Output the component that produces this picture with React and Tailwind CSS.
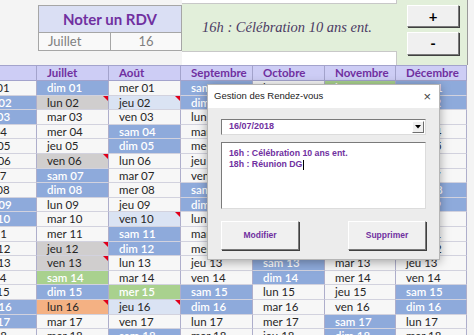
import React from "react";

const DAYS = ["dim", "lun", "mar", "mer", "jeu", "ven", "sam"];

// colonnes du planning (la première, Juin, est coupée par le bord gauche)
const MONTHS = [
  { name: "Juin", start: 5, w: "w-[72px]", special: {} },
  { name: "Juillet", start: 0, w: "w-[72px]", special: { 2: "gray", 6: "gray", 12: "gray", 13: "gray", 14: "holiday", 16: "selected" } },
  { name: "Août", start: 3, w: "w-[72px]", special: { 2: "light", 10: "light", 15: "holiday", 16: "light" } },
  { name: "Septembre", start: 6, w: "w-[72px]", special: {} },
  { name: "Octobre", start: 1, w: "w-[72px]", special: {} },
  { name: "Novembre", start: 4, w: "w-[71px]", special: { 1: "holiday", 11: "holiday" } },
  { name: "Décembre", start: 6, w: "w-[71px]", special: {} },
];

const CELL_STYLES = {
  weekend: "bg-[#8eaadb] text-white font-semibold",
  holiday: "bg-[#a9d18e] text-white font-semibold",
  selected: "bg-[#f4b183] text-[#262626]",
  gray: "bg-[#d0cece] text-[#262626]",
  light: "bg-[#dae3f3] text-[#262626]",
  normal: "bg-[#f7f7f7] text-[#262626]",
};

const WITH_MARKER = ["gray", "light", "selected"];

function DayCell({ month, day }) {
  const dow = (month.start + day - 1) % 7;
  let kind = month.special[day];
  if (!kind) kind = dow === 0 || dow === 6 ? "weekend" : "normal";
  const label = `${DAYS[dow]} ${String(day).padStart(2, "0")}`;
  return (
    <div
      className={`relative h-[14.6px] flex items-center pl-[10px] border-b border-r border-b-[#d2d2de] border-r-[#aeaecb] text-[11.5px] leading-none ${CELL_STYLES[kind]}`}
    >
      {label}
      {WITH_MARKER.includes(kind) && (
        <div className="absolute top-0 right-0 w-0 h-0 border-t-[5px] border-l-[5px] border-t-[#e0001b] border-l-transparent" />
      )}
    </div>
  );
}

function MonthColumn({ month }) {
  const days = Array.from({ length: 18 }, (_, i) => i + 1);
  return (
    <div className={`${month.w} shrink-0 flex flex-col`}>
      <div className="h-[16px] flex items-center pl-[10px] bg-[#cdcdf5] border-y border-r border-[#a3a3cc] text-[11.5px] font-bold text-[#7030a0] leading-none">
        {month.name}
      </div>
      {days.map((d) => (
        <DayCell key={d} month={month} day={d} />
      ))}
    </div>
  );
}

function Win3dButton({ children, className }) {
  return (
    <button
      className={`flex items-center justify-center bg-[#f0f0f0] border border-t-white border-l-white border-r-[#7a7a7a] border-b-[#7a7a7a] shadow-[1px_1px_0_#404040] ${className}`}
    >
      {children}
    </button>
  );
}

export default function App() {
  return (
    <div className="relative w-[474px] h-[335px] overflow-hidden bg-[#f4f4f4] font-['Lato',sans-serif]">
      {/* Haut : Noter un RDV + panneau vert + boutons */}
      <div className="h-[65px] flex">
        <div className="w-[38px] shrink-0" />
        <div className="w-[144px] shrink-0 pt-[5px]">
          <div className="h-[28px] flex items-center justify-center bg-[#dadff4] border border-[#a6a6a6] text-[15px] font-bold text-[#7030a0]">
            Noter un RDV
          </div>
          <div className="h-[18px] flex border-x border-b border-[#a6a6a6] bg-[#f9f9f9] text-[13px] text-[#7f7f7f] leading-none">
            <div className="w-[72px] flex items-center pl-[9px] border-r border-[#a6a6a6]">Juillet</div>
            <div className="flex-1 flex items-center justify-center">16</div>
          </div>
        </div>
        <div className="w-[286px] shrink-0 flex bg-[#e2efda] border-r border-[#9a9a9a]">
          <div className="w-[215px] flex flex-col">
            <div className="h-[4px] bg-white border-b border-r border-[#c8c8c8]" />
            <div className="flex-1 flex items-center pl-[20px] font-['Liberation_Serif',serif] italic text-[14.5px] text-[#4b3a63]">
              16h : Célébration 10 ans ent.
            </div>
            <div className="h-[14px] bg-white border-t border-r border-[#c8c8c8]" />
          </div>
          <div className="flex-1 flex flex-col pl-[10px] pt-[5px] gap-[5px]">
            <Win3dButton className="w-[52px] h-[22px] text-[15px] font-bold text-black">+</Win3dButton>
            <Win3dButton className="w-[52px] h-[23px] text-[15px] font-bold text-black">-</Win3dButton>
          </div>
        </div>
      </div>

      {/* Planning */}
      <div className="w-[468px] overflow-hidden">
        <div className="flex ml-[-35px]">
          {MONTHS.map((m) => (
            <MonthColumn key={m.name} month={m} />
          ))}
        </div>
      </div>

      {/* Fenêtre Gestion des Rendez-vous */}
      <div className="absolute left-[207px] top-[84px] w-[233px] h-[176px] flex flex-col bg-[#ececec] border border-[#b5b5b5] shadow-[0_2px_10px_rgba(0,0,0,0.35)] font-['Liberation_Sans',sans-serif]">
        <div className="h-[23px] shrink-0 flex items-center justify-between bg-white pl-[6px] pr-[8px] text-[9.5px] text-[#222]">
          <span>Gestion des Rendez-vous</span>
          <span className="text-[13px] text-[#444] leading-none">×</span>
        </div>
        <div className="flex-1 flex flex-col px-[13px] pt-[11px]">
          <div className="h-[16px] flex bg-white border border-t-[#7a7a7a] border-l-[#7a7a7a] border-r-[#dcdcdc] border-b-[#dcdcdc]">
            <div className="flex-1 flex items-center pl-[7px] text-[9px] font-bold text-[#7030a0]">16/07/2018</div>
            <div className="w-[12px] my-[1px] mr-[1px] flex items-center justify-center bg-[#f0f0f0] border border-t-white border-l-white border-r-[#6e6e6e] border-b-[#6e6e6e]">
              <svg width="6" height="4" viewBox="0 0 6 4">
                <path d="M0 0 L6 0 L3 3.5 Z" fill="#000" />
              </svg>
            </div>
          </div>
          <div className="mt-[7px] h-[67px] bg-white border border-t-[#7a7a7a] border-l-[#7a7a7a] border-r-[#dcdcdc] border-b-[#dcdcdc] pl-[7px] pt-[5px] text-[8.75px] font-bold text-[#7030a0] leading-[11px]">
            <div>16h : Célébration 10 ans ent.</div>
            <div className="flex items-center">
              18h : Réunion DG
              <span className="ml-[1px] w-px h-[10px] bg-black" />
            </div>
          </div>
          <div className="mt-[12px] flex justify-between">
            <Win3dButton className="w-[78px] h-[29px] text-[8.5px] font-bold text-[#7030a0]">Modifier</Win3dButton>
            <Win3dButton className="w-[78px] h-[29px] text-[8.5px] font-bold text-[#7030a0]">Supprimer</Win3dButton>
          </div>
        </div>
      </div>
    </div>
  );
}
